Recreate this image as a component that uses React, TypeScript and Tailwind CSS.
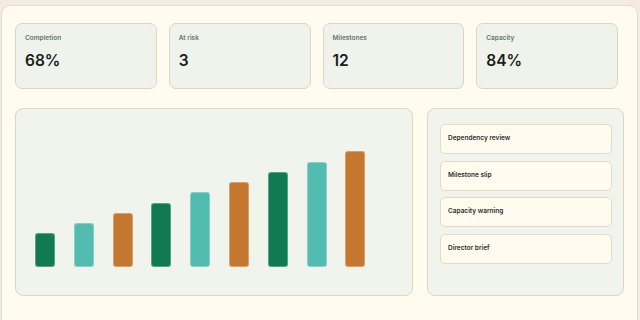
const stats = [
  { label: "Completion", value: "68%" },
  { label: "At risk", value: "3" },
  { label: "Milestones", value: "12" },
  { label: "Capacity", value: "84%" },
]

const bars = [
  { h: 34, c: "bg-[#107a55]" },
  { h: 44, c: "bg-[#53bcb1]" },
  { h: 54, c: "bg-[#c3772f]" },
  { h: 64, c: "bg-[#107a55]" },
  { h: 75, c: "bg-[#53bcb1]" },
  { h: 85, c: "bg-[#c3772f]" },
  { h: 95, c: "bg-[#107a55]" },
  { h: 105, c: "bg-[#53bcb1]" },
  { h: 116, c: "bg-[#c3772f]" },
]

const items = ["Dependency review", "Milestone slip", "Capacity warning", "Director brief"]

const StatCard = ({ label, value }: { label: string; value: string }) => (
  <div className="h-[66px] rounded-[7px] border border-[#ddd5c3] bg-[#f0f3eb] px-[9px] pt-[10px]">
    <div className="text-[6.5px] leading-[9px] font-semibold text-[#66736b]">{label}</div>
    <div className="mt-[9px] text-[15.5px] leading-[18px] font-semibold text-[#17201b]">{value}</div>
  </div>
)

export default function App() {
  return (
    <div className="min-h-screen overflow-hidden bg-[#f4ece2] pt-[5px] pl-[1px] pr-[2px] font-['Inter',sans-serif]">
      <div className="h-[330px] rounded-[9px] border border-[#e6dccb] bg-[#fffbef] pl-[13px] pt-[17px]">
        <div className="grid w-[603px] grid-cols-4 gap-[12px]">
          {stats.map((s) => (
            <StatCard key={s.label} label={s.label} value={s.value} />
          ))}
        </div>

        <div className="mt-[19px] grid w-[609px] grid-cols-[398px_197px] gap-[14px]">
          <div className="flex h-[188px] items-end gap-[18.8px] rounded-[8px] border border-[#ddd5c3] bg-[#f1f4ec] pl-[19px] pb-[28px]">
            {bars.map((b, i) => (
              <div
                key={i}
                className={`w-[20px] rounded-[3px] border border-white/30 ${b.c}`}
                style={{ height: b.h }}
              />
            ))}
          </div>

          <div className="flex h-[188px] flex-col gap-[6.5px] rounded-[8px] border border-[#ddd5c3] bg-[#f1f4ec] pl-[12px] pr-[11px] pt-[15px]">
            {items.map((t) => (
              <div
                key={t}
                className="h-[30px] rounded-[5px] border border-[#e3dac8] bg-[#fffbef] pl-[7px] pt-[9px] text-[6.5px] leading-[9px] font-semibold text-[#2a302c]"
              >
                {t}
              </div>
            ))}
          </div>
        </div>
      </div>
    </div>
  )
}
